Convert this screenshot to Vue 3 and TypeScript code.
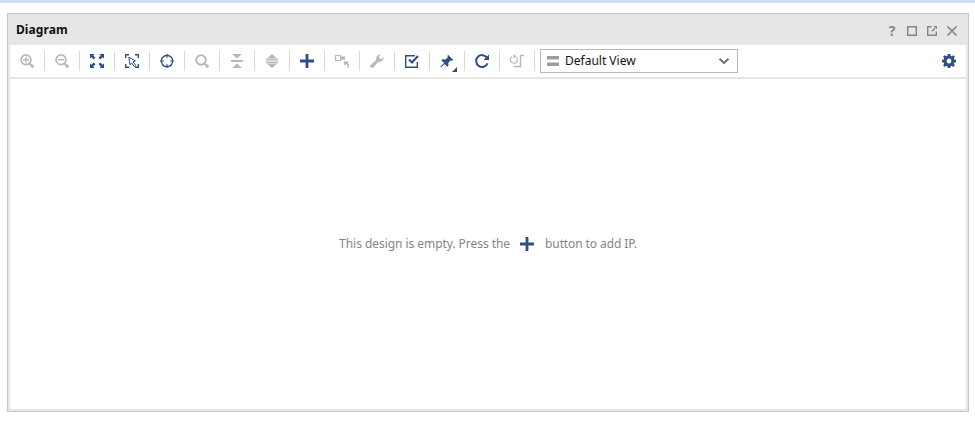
<script setup lang="ts">
interface Shape {
  d: string
  fill?: boolean
  width?: number
  color?: string
}
interface Tool {
  name: string
  disabled?: boolean
  shapes: Shape[]
}

const lens = 'M7 1.800a4.900 4.900 0 1 0 .01 0zM10.500 10.200l3 3'
const plus = 'M6.600 1h2.800v5.600H15v2.800H9.400V15H6.600V9.400H1V6.600h5.600z'

const tools: Tool[] = [
  { name: 'Zoom In', disabled: true, shapes: [{ d: lens, width: 1.7 }, { d: 'M12 12l2.300 2.300', width: 2.8 }, { d: 'M4 6.700h6M7 3.700v6', width: 1.400 }] },
  { name: 'Zoom Out', disabled: true, shapes: [{ d: lens, width: 1.7 }, { d: 'M12 12l2.300 2.300', width: 2.8 }, { d: 'M4 6.700h6', width: 1.600 }] },
  { name: 'Zoom Fit', shapes: [
    { d: 'M1 1h4.600L4.200 2.400 6.500 4.700 4.700 6.500 2.400 4.200 1 5.600zM15 1h-4.600l1.400 1.400L9.500 4.700l1.800 1.800 2.300-2.300L15 5.600zM1 15h4.600l-1.400-1.400L6.500 11.300l-1.800-1.800-2.300 2.300L1 10.400zM15 15h-4.600l1.400-1.400L9.500 11.300l1.800-1.800 2.300 2.300L15 10.400z', fill: true },
  ] },
  { name: 'Select Area', shapes: [
    { d: 'M1.700 5V1.700H5M11 1.700h3.300V5M1.700 11v3.300H5M11 14.300h3.300V11', width: 1.400 },
    { d: 'M4.800 4.200l6.600 3.700-2.500.9 2.800 3.600-1.400 1.100-2.800-3.600-1.500 2z', width: 1 },
  ] },
  { name: 'Auto-fit Selection', shapes: [
    { d: 'M8 2.300a5.700 5.700 0 1 0 .01 0z', width: 1.300 },
    { d: 'M8 1v3.800M8 11.200V15M1 8h3.800M11.200 8H15', width: 1.200 },
  ] },
  { name: 'Search', disabled: true, shapes: [{ d: 'M7 2.100a4.800 4.800 0 1 0 .01 0z', width: 1.900 }, { d: 'M10.500 10.500l1.500 1.500', width: 1.600 }, { d: 'M11.800 11.800l2.400 2.400', width: 2.800 }] },
  { name: 'Collapse All', disabled: true, shapes: [{ d: 'M3 1h10L8 5.500zM2 7h12v2H2zM3 15h10L8 10.500z', fill: true }] },
  { name: 'Expand All', disabled: true, shapes: [{ d: 'M8 1l5 4.300H3zM2 5.700h12v1.700H2zM2 8.600h12v1.700H2zM3 10.700h10l-5 4.300z', fill: true }] },
  { name: 'Add IP', shapes: [{ d: plus, fill: true }] },
  { name: 'Make Connection', disabled: true, shapes: [
    { d: 'M1.500 2.500h5v5h-5z', width: 1.100 },
    { d: 'M7 3.500h4v3.300H7zM10 8.500h5l-1.500 1.300L15 11v3.500h-1.500V12L12 11l-1 1.500-1-1z', fill: true },
  ] },
  { name: 'Customize Block', disabled: true, shapes: [
    { d: 'M1.500 12.300L7.300 7C6.700 4.300 8.300 1.500 11.800 1.200L10 3.500l.5 2 2 .5L14.800 4c.2 3-2.500 5.400-5.300 4.800L4 14.700c-1.800 1-3.500-.8-2.500-2.400z', fill: true },
  ] },
  { name: 'Validate Design', shapes: [
    { d: 'M11 2.700H1.700v11.600h11.600V9', width: 1.400 },
    { d: 'M5 6.500l3 3L14 3', width: 2.100 },
  ] },
  { name: 'Pin', shapes: [
    { d: 'M9 1.700l5.300 5.300-1.500.8-1.300-.2-2.300 2.300.3 2.800-1.200 1-2.600-2.700L2 14.500l-.8-.8 4-3.700L2.300 7.300l1.200-1 3 .1 2.300-2.100-.4-1.300z', fill: true },
    { d: 'M18 14v5h-5z', fill: true, color: '#484848' },
  ] },
  { name: 'Regenerate Layout', shapes: [
    { d: 'M13 4.800A5.900 5.900 0 1 0 13.500 10.300', width: 2 },
    { d: 'M15 1.500v5.500H9.500z', fill: true },
  ] },
  { name: 'Optimize Routing', disabled: true, shapes: [
    { d: 'M3 3.800a3.500 3.500 0 1 0 4.200.3', width: 1.200 },
    { d: 'M4.500 1v4.500L7.500 3.200z', fill: true },
    { d: 'M15 2.500h-3.500v11H5', width: 1.400 },
  ] },
]
</script>

<template>
  <div class="page">
    <section class="panel">
      <header class="titlebar">
        <h1>Diagram</h1>
        <div class="controls">
          <span class="help">?</span>
          <svg viewBox="0 0 12 12"><path d="M1.700 1.700h8.600v8.600H1.700z" stroke-width="1.500" /></svg>
          <svg viewBox="0 0 12 12"><path d="M5.500 1.700H1.700v8.600h8.600V6.500" stroke-width="1.400" /><path d="M6 6.200L9 3.200" stroke-width="1.400" /><path class="solid" d="M7.500 1H11v3.500z" /></svg>
          <svg viewBox="0 0 12 12"><path d="M1.500 1.500l9 9M10.500 1.500l-9 9" stroke-width="1.700" /></svg>
        </div>
      </header>
      <div class="toolbar">
        <button v-for="tool in tools" :key="tool.name" class="tool" :class="{ disabled: tool.disabled }" :aria-label="tool.name">
          <svg viewBox="0 0 16 16">
            <path
              v-for="(shape, i) in tool.shapes"
              :key="i"
              :d="shape.d"
              :fill="shape.fill ? shape.color ?? 'currentColor' : 'none'"
              :stroke="shape.fill ? 'none' : 'currentColor'"
              :stroke-width="shape.width"
            />
          </svg>
        </button>
        <div class="select">
          <svg class="bars" viewBox="0 0 12 12"><path d="M0 1h12v3.600H0zM0 7.400h12V11H0z" /></svg>
          <span class="value">Default View</span>
          <svg class="chevron" viewBox="0 0 12 8"><path d="M1.500 1.700L6 5.900l4.500-4.200" /></svg>
        </div>
        <svg class="gear" viewBox="0 0 16 16">
          <path
            fill-rule="evenodd"
            d="M6.700 1h2.600l.4 1.900 1 .4 1.600-1.100 1.600 1.600-1.100 1.600.4 1 1.800.3v2.600l-1.800.4-.4 1 1.100 1.600-1.600 1.600-1.600-1.100-1 .4-.4 1.800H6.700l-.4-1.800-1-.4-1.600 1.100-1.600-1.600 1.100-1.600-.4-1L1 9.300V6.700l1.800-.3.4-1-1.100-1.600 1.600-1.600 1.600 1.100 1-.4zM8 5.600a2.400 2.400 0 1 0 .01 0z"
          />
        </svg>
      </div>
      <main class="canvas">
        <p class="hint">
          <span>This design is empty. Press the</span>
          <svg viewBox="0 0 16 16"><path :d="plus" /></svg>
          <span class="tail">button to add IP.</span>
        </p>
      </main>
    </section>
  </div>
</template>

<style>
body {
  background: #fff;
}
</style>

<style scoped>
.page {
  box-sizing: border-box;
  height: 422px;
  padding: 10px 6px 10px 7px;
  border-top: 3px solid #ccdeff;
  font-family: "Noto Sans", sans-serif;
  font-size: 12px;
}
.panel {
  box-sizing: border-box;
  display: flex;
  flex-direction: column;
  height: 399px;
  border: 1px solid #c8c8c8;
  padding: 0 2px 2px;
  background: #e6e6e6;
}
.titlebar {
  display: flex;
  justify-content: space-between;
  height: 31px;
  padding: 0 8px 0 6px;
}
h1 {
  margin: 0;
  font-size: 12px;
  line-height: 31px;
  font-weight: 700;
  letter-spacing: 0.08px;
  color: #111;
}
.controls {
  display: flex;
  align-items: center;
  gap: 8px;
  padding-top: 3px;
  color: #878787;
}
.controls svg {
  width: 12px;
  height: 12px;
  fill: none;
  stroke: currentColor;
}
.controls .solid {
  fill: currentColor;
  stroke: none;
}
.help {
  width: 12px;
  padding-bottom: 1px;
  text-align: center;
  font-size: 14px;
  line-height: 14px;
  font-weight: 700;
}
.toolbar {
  display: flex;
  align-items: center;
  height: 32px;
  margin-bottom: 2px;
  background: #fff;
}
.tool {
  box-sizing: border-box;
  display: flex;
  align-items: center;
  justify-content: center;
  width: 35px;
  height: 20px;
  padding: 0;
  border: 0;
  border-right: 1px solid #d8d8d8;
  background: none;
  color: #2f4e85;
}
.tool.disabled {
  color: #b8b8b8;
}
.tool svg {
  width: 16px;
  height: 16px;
  overflow: visible;
}
.select {
  box-sizing: border-box;
  display: flex;
  align-items: center;
  width: 198px;
  height: 24px;
  margin-left: 5px;
  padding: 0 7px 0 6px;
  border: 1px solid #b8b8b8;
  color: #111;
}
.bars {
  width: 12px;
  height: 12px;
  fill: #9c9c9c;
}
.value {
  flex: 1;
  margin-left: 6px;
  line-height: 20px;
}
.chevron {
  width: 12px;
  height: 8px;
  fill: none;
  stroke: #707070;
  stroke-width: 2;
}
.gear {
  width: 16px;
  height: 16px;
  margin-left: auto;
  margin-right: 9px;
  fill: #2f4e85;
}
.canvas {
  display: flex;
  flex: 1;
  align-items: center;
  justify-content: center;
  background: #fff;
}
.hint {
  display: flex;
  align-items: center;
  margin: 0;
  color: #858585;
  line-height: 16px;
  letter-spacing: -0.05px;
}
.hint .tail {
  letter-spacing: -0.1px;
}
.hint svg {
  width: 16px;
  height: 16px;
  margin: 0 10px 0 9px;
  fill: #2f4e85;
}
</style>
